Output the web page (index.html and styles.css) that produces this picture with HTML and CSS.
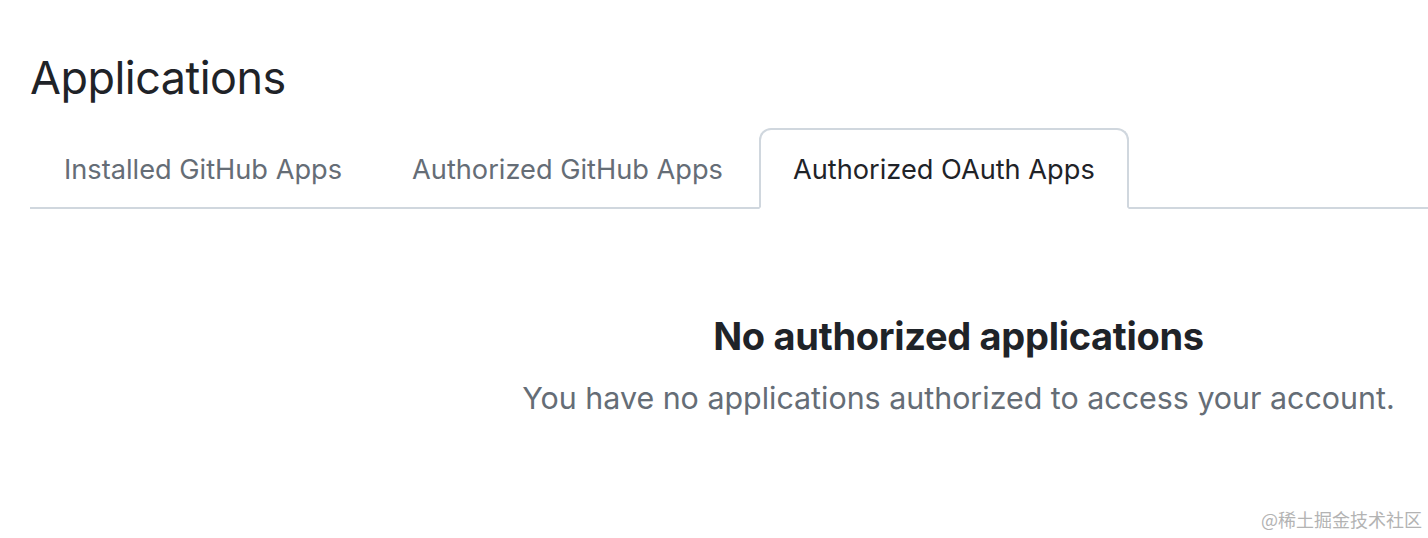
FILE: index.html
```html
<!DOCTYPE html>
<html lang="en">
<head>
<meta charset="utf-8">
<title>Applications</title>
<link rel="stylesheet" href="styles.css">
</head>
<body>
<div class="page">
    <h2 class="subhead">Applications</h2>
    <nav class="tabnav">
        <a class="tab" href="#">Installed GitHub Apps</a>
        <a class="tab" href="#">Authorized GitHub Apps</a>
        <a class="tab selected" href="#">Authorized OAuth Apps</a>
    </nav>
    <div class="blankslate">
        <h3>No authorized applications</h3>
        <p>You have no applications authorized to access your account.</p>
    </div>
</div>
<div class="mark">@稀土掘金技术社区</div>
</body>
</html>
```

FILE: styles.css
```css
html,body,h2,h3,p{margin:0;padding:0;}
body{background:#fff;color:#1f2328;font-family:Inter,"Liberation Sans","Noto Sans CJK SC",sans-serif;overflow:hidden;width:1428px;height:538px;position:relative;}
.page{width:1857px;padding:42px 0 0 30px;}
.subhead{font-size:44.9px;font-weight:400;line-height:72px;letter-spacing:-0.5px;}
.tabnav{display:flex;margin-top:14px;border-bottom:2px solid #d0d7de;}
.tab{display:block;padding:19px 34px 16px 32px;font-size:27.2px;line-height:42px;color:#656d76;text-decoration:none;border:2px solid transparent;border-radius:12px 12px 0 0;margin-bottom:-2px;}
.tab.selected{padding-right:32px;color:#1f2328;border-color:#d0d7de;border-bottom-color:#fff;background:#fff;}
.blankslate{text-align:center;padding-top:101px;}
.blankslate h3{font-size:38px;font-weight:700;line-height:52px;letter-spacing:-0.3px;}
.blankslate p{font-size:30.4px;line-height:48px;color:#656d76;margin-top:12px;}
.mark{position:absolute;right:6px;bottom:6px;font-size:18px;color:#b3b3b3;font-family:"Noto Sans CJK SC",sans-serif;}
```
